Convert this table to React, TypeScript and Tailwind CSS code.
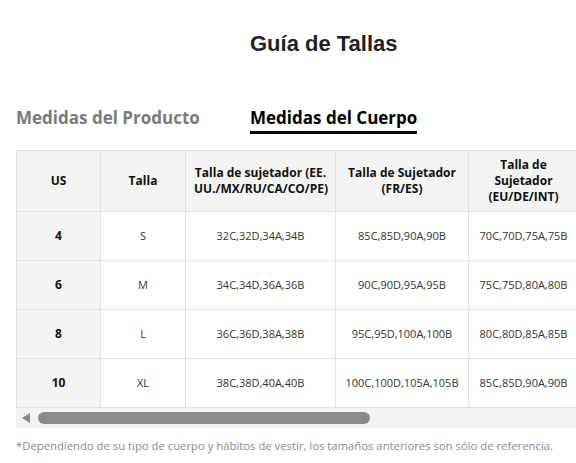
const headers = [
  'US',
  'Talla',
  'Talla de sujetador (EE. UU./MX/RU/CA/CO/PE)',
  'Talla de Sujetador (FR/ES)',
  'Talla de Sujetador (EU/DE/INT)',
];

const rows = [
  ['4', 'S', '32C,32D,34A,34B', '85C,85D,90A,90B', '70C,70D,75A,75B'],
  ['6', 'M', '34C,34D,36A,36B', '90C,90D,95A,95B', '75C,75D,80A,80B'],
  ['8', 'L', '36C,36D,38A,38B', '95C,95D,100A,100B', '80C,80D,85A,85B'],
  ['10', 'XL', '38C,38D,40A,40B', '100C,100D,105A,105B', '85C,85D,90A,90B'],
];

const colWidths = ['w-[84px]', 'w-[85px]', 'w-[150px]', 'w-[133px]', 'w-[110px]'];

export default function App() {
  return (
    <div className="w-[576px] h-[463px] overflow-hidden bg-white font-['Open_Sans',sans-serif] text-[#222]">
      {/* Title */}
      <div className="pt-[31px] pl-[250px] h-[100px]">
        <h1 className="font-['Liberation_Sans',Arial,sans-serif] font-bold text-[22px] leading-[26px] text-[#222]">
          Guía de Tallas
        </h1>
      </div>

      {/* Tabs */}
      <div className="flex pl-4 h-[50px]">
        <div className="w-[234px] pt-[5px] text-[17px] font-bold leading-[25px] text-[#7a7a7a]">
          Medidas del Producto
        </div>
        <div className="pt-[5px]">
          <div className="text-[17px] font-bold leading-[25px] text-black">Medidas del Cuerpo</div>
          <div className="h-[3px] bg-black mt-[1px]" />
        </div>
      </div>

      {/* Table */}
      <div className="ml-4 overflow-hidden">
        <table className="table-fixed border-collapse w-[562px]">
          <colgroup>
            {colWidths.map((w, i) => (
              <col key={i} className={w} />
            ))}
          </colgroup>
          <thead>
            <tr className="h-[61px] bg-[#f4f4f4]">
              {headers.map((h, i) => (
                <th
                  key={i}
                  className="border border-[#e2e2e2] px-2 text-[12px] font-bold leading-[16px] text-center align-middle text-[#111]"
                >
                  {h}
                </th>
              ))}
            </tr>
          </thead>
          <tbody>
            {rows.map((r, ri) => (
              <tr key={ri} className="h-[49px]">
                {r.map((c, ci) => (
                  <td
                    key={ci}
                    className={
                      ci === 0
                        ? 'border border-[#e2e2e2] bg-[#f4f4f4] text-center text-[12px] font-bold text-[#111]'
                        : 'border border-[#e2e2e2] text-center text-[11px] text-[#333] whitespace-nowrap'
                    }
                  >
                    {c}
                  </td>
                ))}
              </tr>
            ))}
          </tbody>
        </table>

        {/* Scrollbar */}
        <div className="flex items-center h-[20px] bg-[#f3f3f3]">
          <div className="ml-[6px] w-0 h-0 border-y-[5px] border-y-transparent border-r-[8px] border-r-[#8a8a8a]" />
          <div className="ml-[8px] w-[332px] h-[12px] rounded-full bg-[#8b8b8b]" />
        </div>
      </div>

      {/* Note */}
      <p className="mt-[10px] pl-4 text-[11.3px] leading-[16px] text-[#8a8a8a] whitespace-nowrap">
        *Dependiendo de su tipo de cuerpo y hábitos de vestir, los tamaños anteriores son sólo de referencia.
      </p>
    </div>
  );
}
